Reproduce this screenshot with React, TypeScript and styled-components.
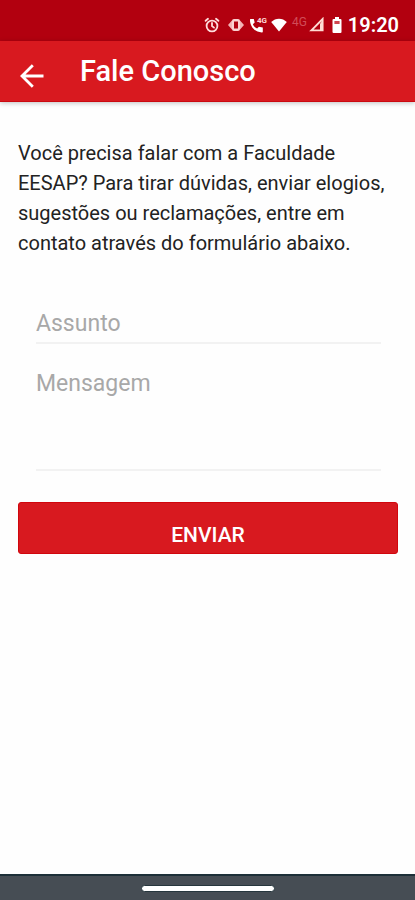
import React from "react";
import styled, { createGlobalStyle } from "styled-components";

const GlobalStyle = createGlobalStyle`
  *, *::before, *::after { box-sizing: border-box; }
  body { margin: 0; background: #fefefe; font-family: Roboto, "Liberation Sans", sans-serif; }
`;

const Screen = styled.div`
  display: flex;
  flex-direction: column;
  min-height: 100vh;
`;

const StatusBar = styled.div`
  display: flex;
  align-items: center;
  justify-content: flex-end;
  height: 41px;
  padding: 8px 16px 0 0;
  background: #b2000f;
  color: #fff;
`;

const StatusIcon = styled.svg<{ $gap: number }>`
  display: block;
  flex: none;
  margin-right: ${({ $gap }) => $gap}px;
`;

const CallIcon = styled.span`
  display: flex;
  align-items: flex-start;
  margin-right: 4px;
`;

const CallBadge = styled.span`
  margin-left: -7px;
  font-size: 8px;
  line-height: 8px;
  font-weight: 700;
  color: #ffd9d9;
`;

const Network = styled.span`
  margin: 0 2px 6px 0;
  font-size: 12px;
  line-height: 12px;
  color: #d04c58;
`;

const Clock = styled.time`
  font-size: 20px;
  line-height: 24px;
  font-weight: 600;
`;

const AppBar = styled.header`
  display: flex;
  align-items: center;
  gap: 32px;
  height: 61px;
  padding: 0 16px;
  background: #d8191f;
  color: #fff;
  border-bottom: 1px solid #cb0910;
  box-shadow: 0 1px 5px rgba(0, 0, 0, 0.25);
`;

const BackButton = styled.button`
  display: grid;
  place-items: center;
  width: 32px;
  height: 32px;
  margin-top: 10px;
  padding: 0;
  border: 0;
  background: none;
  color: inherit;
`;

const Title = styled.h1`
  margin: 0;
  font-size: 29px;
  line-height: 32px;
  font-weight: 500;
`;

const Content = styled.main`
  flex: 1;
  padding: 36px 17px 0 18px;
`;

const Intro = styled.p`
  margin: 0;
  font-size: 20px;
  line-height: 30px;
  color: #222;
`;

const Form = styled.form`
  display: flex;
  flex-direction: column;
  padding-top: 45px;
`;

const fieldStyles = `
  display: block;
  margin: 0 17px 0 18px;
  padding: 0;
  border: 0;
  border-bottom: 2px solid #f2f2f2;
  border-radius: 0;
  outline: 0;
  background: none;
  font-family: inherit;
  font-size: 23px;
  line-height: 28px;
  color: #222;
  &::placeholder { color: #a8a8a8; opacity: 1; }
`;

const Subject = styled.input`
  ${fieldStyles}
  height: 41px;
  padding-top: 2px;
`;

const Message = styled.textarea`
  ${fieldStyles}
  height: 101px;
  margin-top: 26px;
  resize: none;
`;

const Submit = styled.button`
  height: 52px;
  margin-top: 31px;
  padding: 14px 0 0;
  border: 1px solid #d1060d;
  border-radius: 3px;
  background: #d8191f;
  color: #fff;
  font-family: inherit;
  font-size: 21px;
  line-height: 24px;
  font-weight: 500;
`;

const NavigationBar = styled.footer`
  display: flex;
  justify-content: center;
  align-items: center;
  height: 26px;
  border-top: 2px solid #1d2f38;
  background: #464d54;
`;

const HomeHandle = styled.span`
  width: 134px;
  height: 7px;
  border: 1px solid #26363d;
  border-radius: 4px;
  background: #fff;
`;

export default function App() {
  return (
    <Screen>
      <GlobalStyle />
      <StatusBar>
        <StatusIcon $gap={8} width="16" height="16" viewBox="0 0 16 16" fill="none" stroke="#ffdcdc" strokeWidth="1.8" strokeLinecap="round" aria-hidden="true">
          <circle cx="8" cy="9" r="5.4" />
          <path d="M8 6v3l2 1.6M1.6 3.8l2.4-2M14.4 3.8L12 1.8" />
        </StatusIcon>
        <StatusIcon $gap={6} width="16" height="12" viewBox="0 0 16 12" aria-hidden="true">
          <path d="M0 6l4.4-5v10zM16 6l-4.4-5v10z" fill="#f3b4b6" />
          <rect x="4" y="0" width="8" height="12" rx="2" fill="#fbcfcf" />
          <rect x="6" y="2.5" width="4" height="7" fill="#b2000f" />
        </StatusIcon>
        <CallIcon>
          <svg width="14" height="16" viewBox="0 0 14 16" aria-hidden="true">
            <path d="M.8 2h3l.9 3.5-1.8 1.7c1 2.1 2.3 3.4 4.2 4.3l1.8-1.8 3.9.9v3.8c0 .7-.4 1-1 1C5 15.4 0 9.6 0 3c0-.7.2-1 .8-1z" fill="#fff" />
          </svg>
          <CallBadge>4G</CallBadge>
        </CallIcon>
        <StatusIcon $gap={5} width="16" height="14" viewBox="0 0 16 14" aria-hidden="true">
          <path d="M.2 4C4.5-.5 11.5-.5 15.8 4L8 13.5z" fill="#fff" />
        </StatusIcon>
        <Network>4G</Network>
        <StatusIcon $gap={8} width="15" height="15" viewBox="0 0 15 15" fill="none" aria-hidden="true">
          <path d="M2.4 13.4L13.6 2v11.4z" stroke="#ffdcd4" strokeWidth="1.9" />
          <path d="M11 6.5l3-3v10h-3z" fill="#ffdcd4" />
        </StatusIcon>
        <StatusIcon $gap={6} width="10" height="16" viewBox="0 0 10 16" aria-hidden="true">
          <path d="M3 0h4v2h1.4q1.1 0 1.1 1.1v11.8q0 1.1-1.1 1.1H1.6Q.5 16 .5 14.9V3.1Q.5 2 1.6 2H3z" fill="#fff" />
          <path d="M2.4 4h5.2v3H2.4z" fill="#d0454f" />
        </StatusIcon>
        <Clock>19:20</Clock>
      </StatusBar>
      <AppBar>
        <BackButton type="button" aria-label="Voltar">
          <svg width="24" height="24" viewBox="0 0 24 24" fill="none" stroke="currentColor" strokeWidth="2.8" aria-hidden="true">
            <path d="M23.5 12H2.5M12.8 1.3L2 12l10.8 10.7" />
          </svg>
        </BackButton>
        <Title>Fale Conosco</Title>
      </AppBar>
      <Content>
        <Intro>
          Você precisa falar com a Faculdade EESAP? Para tirar dúvidas, enviar elogios, sugestões ou
          reclamações, entre em contato através do formulário abaixo.
        </Intro>
        <Form onSubmit={(event) => event.preventDefault()}>
          <Subject aria-label="Assunto" placeholder="Assunto" />
          <Message aria-label="Mensagem" placeholder="Mensagem" />
          <Submit type="submit">ENVIAR</Submit>
        </Form>
      </Content>
      <NavigationBar>
        <HomeHandle />
      </NavigationBar>
    </Screen>
  );
}
